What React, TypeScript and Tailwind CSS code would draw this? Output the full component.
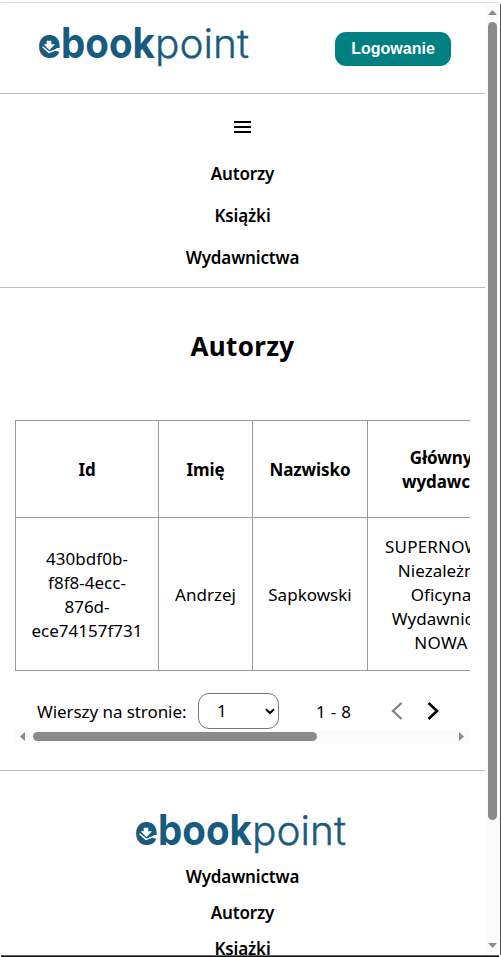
import type { ReactNode } from "react";

function Logo() {
  return (
    <svg viewBox="0 0 210 50" className="block h-[50px] w-[210px] overflow-visible" fill="#185b80" fontFamily="Inter, 'Liberation Sans', sans-serif" letterSpacing="0">
      <text x="-1.5" y="33.5" fontSize="42" fontWeight="700" textLength="23.5" lengthAdjust="spacingAndGlyphs">e</text>
      <text x="22" y="33.5" fontSize="42.500" fontWeight="700" textLength="94" lengthAdjust="spacingAndGlyphs">book</text>
      <text x="116" y="33.5" fontSize="40" fontWeight="300" stroke="#185b80" strokeWidth="0.35" textLength="94" lengthAdjust="spacingAndGlyphs">point</text>
      <ellipse cx="10.500" cy="22" rx="7.500" ry="8" />
      <path d="M7.700 16.700h4.600V20.200H16L10.300 26.200 4.700 20.200h3z" fill="#fff" />
      <path d="M3.500 22.800 10 28.400l9-3.400" fill="none" stroke="#fff" strokeWidth="1.500" />
    </svg>
  );
}

function Arrow({ className }: { className: string }) {
  return (
    <svg viewBox="0 0 9 5" className={`h-[5px] w-[9px] shrink-0 ${className}`} fill="#8b8b8b">
      <path d="M4.5 0 9 5H0z" />
    </svg>
  );
}

function Cell({ children, head = false }: { children: ReactNode; head?: boolean }) {
  return head ? (
    <th className="border border-[#9b9b9b] p-0 pt-[2px] text-center align-middle font-bold tracking-[-0.1px]">{children}</th>
  ) : (
    <td className="border border-[#9b9b9b] p-0 pt-[2px] text-center align-middle tracking-[0.02px]">{children}</td>
  );
}

function AuthorsTable() {
  return (
    <table className="w-[500px] table-fixed border-collapse leading-6">
      <colgroup>
        <col className="w-[143px]" />
        <col className="w-[94px]" />
        <col className="w-[115px]" />
        <col className="w-[147px]" />
      </colgroup>
      <thead>
        <tr className="h-[97px]">
          <Cell head>Id</Cell>
          <Cell head>Imię</Cell>
          <Cell head>Nazwisko</Cell>
          <Cell head>Główny<br />wydawca</Cell>
        </tr>
      </thead>
      <tbody>
        <tr className="h-[153px]">
          <Cell>430bdf0b-<br />f8f8-4ecc-<br />876d-<br />ece74157f731</Cell>
          <Cell>Andrzej</Cell>
          <Cell>Sapkowski</Cell>
          <Cell>
            <span className="pr-[6px] tracking-[0.2px]">SUPERNOWA</span><br />Niezależna<br />Oficyna<br />Wydawnicza<br />
            <span className="tracking-[0.4px]">NOWA</span>
          </Cell>
        </tr>
      </tbody>
    </table>
  );
}

function Pagination() {
  return (
    <div className="flex h-[58px] items-end pl-[22px]">
      <div className="flex h-9 items-center">
        <span className="w-[161px] pt-px whitespace-nowrap">Wierszy na stronie:</span>
        <div className="flex h-9 w-[81px] items-center justify-between rounded-[11px] border border-[#767676] pr-[3px] pl-[18px]">
          <span>1</span>
          <svg viewBox="0 0 10 7" className="h-[7px] w-[10px]" fill="none" stroke="#000" strokeWidth="2">
            <path d="M1 1.2 5 5l4-3.8" />
          </svg>
        </div>
        <span className="ml-[37px] w-[75px] pt-px tracking-[0.3px] whitespace-nowrap">1 - 8</span>
        <svg viewBox="0 0 12 18" className="h-[18px] w-3" fill="none" stroke="#858585" strokeWidth="2.4">
          <path d="M10.5 1 2 9l8.500 8" />
        </svg>
        <svg viewBox="0 0 12 18" className="ml-[24px] h-[18px] w-3" fill="none" stroke="#000" strokeWidth="2.6">
          <path d="M1.500 1 10 9l-8.500 8" />
        </svg>
      </div>
    </div>
  );
}

export default function App() {
  return (
    <div className="flex h-[957px] w-[501px] flex-col overflow-hidden bg-white font-['Noto_Sans','Open_Sans',sans-serif] text-[17px] tracking-[-0.07px] text-black">
      <div className="mt-[2px] mr-[2px] ml-px h-px shrink-0 bg-[#dedede]" />
      <div className="flex h-[952px] shrink-0 overflow-hidden">
        <main className="w-[485px] shrink-0">
          <header className="flex h-[91px] justify-between border-b border-[#bcbcbc] pr-[34px] pl-[39px]">
            <div className="pt-[21px]"><Logo /></div>
            <button className="mt-[29px] h-[34px] w-[116px] rounded-[11px] bg-[#008080] font-['Liberation_Sans',Arial,sans-serif] text-base font-bold tracking-normal text-white">
              Logowanie
            </button>
          </header>
          <nav className="flex h-[194px] flex-col items-center border-b border-[#bcbcbc] font-semibold">
            <svg viewBox="0 0 17 12" className="mt-[27px] h-3 w-[17px] shrink-0" fill="#000">
              <path d="M0 0h17v2H0zM0 5h17v2H0zM0 10h17v2H0z" />
            </svg>
            <ul className="mt-[20px] text-center leading-[42px] tracking-[-0.15px]">
              <li>Autorzy</li>
              <li>Książki</li>
              <li>Wydawnictwa</li>
            </ul>
          </nav>
          <section className="h-[483px] border-b border-[#bcbcbc] px-[15px]">
            <h1 className="h-[132px] pt-[38px] text-center text-[26px] leading-[40px] font-bold tracking-[0.35px]">Autorzy</h1>
            <div className="w-[455px] overflow-hidden">
              <AuthorsTable />
              <Pagination />
              <div className="flex h-[15px] items-center bg-[#fbfbfb] pr-[4px] pl-[3px]">
                <Arrow className="-rotate-90" />
                <div className="ml-[6px] h-[9px] w-[284px] rounded-full bg-[#8b8b8b]" />
                <Arrow className="ml-auto rotate-90" />
              </div>
            </div>
          </section>
          <footer className="flex flex-col items-center font-semibold">
            <div className="mt-[40px] mr-[4px]"><Logo /></div>
            <ul className="-mt-[2px] text-center leading-9 tracking-[-0.15px]">
              <li>Wydawnictwa</li>
              <li>Autorzy</li>
              <li>Książki</li>
            </ul>
          </footer>
        </main>
        <aside className="flex w-[15px] shrink-0 flex-col items-center bg-[#fbfbfb]">
          <Arrow className="mt-[7px]" />
          <div className="mt-[7px] h-[798px] w-[9px] rounded-full bg-[#8b8b8b]" />
          <Arrow className="mt-auto mb-[7px] rotate-180" />
        </aside>
        <div className="mt-px w-px bg-[#555]" />
      </div>
      <div className="mr-[2px] ml-px h-[2px] shrink-0 border-t border-[#666] bg-[#111]" />
    </div>
  );
}
